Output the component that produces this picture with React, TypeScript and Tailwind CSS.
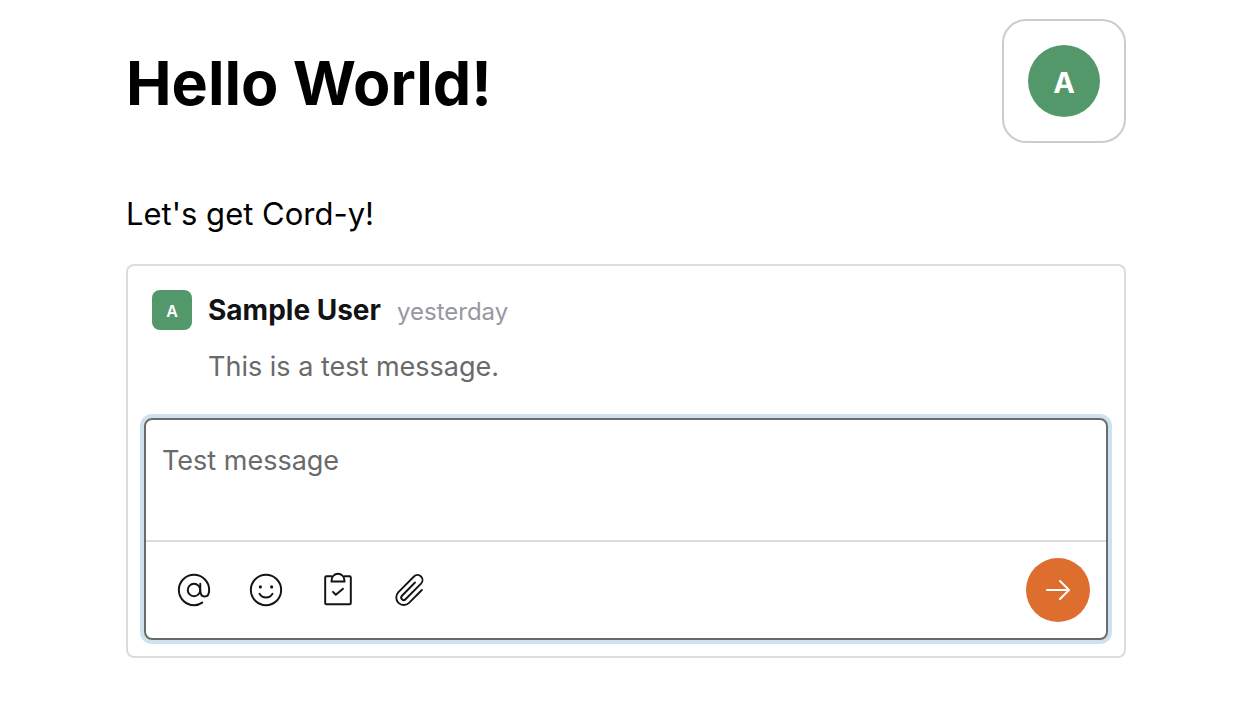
import type { ReactNode } from "react";
import { PiArrowRight, PiPaperclipLight } from "react-icons/pi";

function LineIcon({ children }: { children: ReactNode }) {
  return (
    <svg
      viewBox="0 0 256 256"
      className="size-10"
      fill="none"
      stroke="currentColor"
      strokeWidth="12.5"
      strokeLinecap="round"
      strokeLinejoin="round"
      aria-hidden="true"
    >
      {children}
    </svg>
  );
}

function AtSign() {
  return (
    <LineIcon>
      <circle cx="128" cy="128" r="40" />
      <path d="M181 208.5C166 219 147 225 128 225a97 97 0 1 1 97-97c0 26-9 42-28.500 42S168 154 168 128V88" />
    </LineIcon>
  );
}

function Smiley() {
  return (
    <LineIcon>
      <circle cx="128" cy="128" r="97" />
      <path d="M169.600 152a48.100 48.100 0 0 1-83.200 0" />
      <circle cx="92" cy="108" r="10" fill="currentColor" stroke="none" />
      <circle cx="164" cy="108" r="10" fill="currentColor" stroke="none" />
    </LineIcon>
  );
}

function ClipboardCheck() {
  return (
    <LineIcon>
      <path d="M86 40H54a8 8 0 0 0-8 8v163a8 8 0 0 0 8 8h148a8 8 0 0 0 8-8V48a8 8 0 0 0-8-8h-32" />
      <path d="M87 74V65a41 41 0 0 1 82 0v9Z" strokeLinejoin="miter" />
      <path d="m96 140 18 18 46-38" />
    </LineIcon>
  );
}

const tools = [
  { label: "Mention someone", icon: <AtSign /> },
  { label: "Add emoji", icon: <Smiley /> },
  { label: "Add task", icon: <ClipboardCheck /> },
  { label: "Attach file", icon: <PiPaperclipLight className="size-10" /> },
];

function Header() {
  return (
    <header className="flex items-center justify-between">
      <h1 className="pt-1 text-[61px] leading-[80px] font-bold">Hello World!</h1>
      <div className="rounded-3xl border-2 border-[#cccccc] p-6">
        <div className="flex size-[72px] items-center justify-center rounded-full bg-[#53986a] pt-1 text-[29px] leading-10 font-bold text-white">
          A
        </div>
      </div>
    </header>
  );
}

function Message() {
  return (
    <article className="flex gap-4 px-6 pt-6">
      <div className="flex size-10 shrink-0 items-center justify-center rounded-lg bg-[#53986a] pt-0.5 text-base font-semibold text-white">
        A
      </div>
      <div>
        <div className="flex h-10 items-baseline gap-4 leading-10">
          <span className="text-[28px] font-bold text-[#121314]">Sample User</span>
          <time className="text-2xl leading-10 text-[#97979f]">yesterday</time>
        </div>
        <p className="mt-4 text-[27px] leading-[42px] text-[#696a6c]">This is a test message.</p>
      </div>
    </article>
  );
}

function Composer() {
  return (
    <form
      className="mx-4 mt-[30px] mb-4 rounded-lg border-2 border-[#696a6c] ring-4 ring-[#cde1ee]"
      onSubmit={(e) => e.preventDefault()}
    >
      <textarea
        aria-label="Message"
        defaultValue="Test message"
        className="block h-[120px] w-full resize-none bg-transparent px-4 pt-5 text-[27px] leading-[42px] text-[#696a6c] outline-none"
      />
      <div className="flex items-center justify-between border-t-2 border-[#dadce0] p-4">
        <div className="flex gap-2">
          {tools.map((tool) => (
            <button
              key={tool.label}
              type="button"
              aria-label={tool.label}
              className="flex size-16 items-center justify-center text-[#121314]"
            >
              {tool.icon}
            </button>
          ))}
        </div>
        <button
          type="submit"
          aria-label="Send"
          className="flex size-16 items-center justify-center rounded-full bg-[#dd6e2e] text-white"
        >
          <PiArrowRight className="size-8" />
        </button>
      </div>
    </form>
  );
}

export default function App() {
  return (
    <main className="bg-white pt-[19px] pr-[124px] pb-10 pl-[126px] font-['Inter',sans-serif] text-black">
      <Header />
      <p className="mt-[51px] text-[31px] leading-10">Let's get Cord-y!</p>
      <section className="mt-[30px] rounded-lg border-2 border-[#dadce0]">
        <Message />
        <Composer />
      </section>
    </main>
  );
}
